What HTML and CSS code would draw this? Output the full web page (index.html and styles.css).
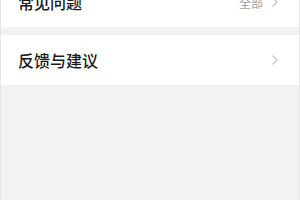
FILE: index.html
```html
<!DOCTYPE html>
<html lang="zh-CN">
<head>
    <meta charset="UTF-8">
    <meta name="viewport" content="width=device-width, initial-scale=1.0">
    <title>帮助与反馈</title>
    <link rel="stylesheet" href="styles.css">
</head>
<body>
    <div class="page">
        <div class="list">
            <div class="cell">
                <span class="cell-title">常见问题</span>
                <span class="cell-extra">全部
                    <svg class="arrow" width="8" height="12" viewBox="0 0 8 12"><path d="M1.5 1.5 L6 6 L1.5 10.5" fill="none" stroke="#c4c4c4" stroke-width="1.2"/></svg>
                </span>
            </div>
        </div>

        <div class="list">
            <div class="cell">
                <span class="cell-title">反馈与建议</span>
                <span class="cell-extra">
                    <svg class="arrow" width="8" height="12" viewBox="0 0 8 12"><path d="M1.5 1.5 L6 6 L1.5 10.5" fill="none" stroke="#c4c4c4" stroke-width="1.2"/></svg>
                </span>
            </div>
        </div>
    </div>
</body>
</html>
```

FILE: styles.css
```css
body {
    margin: 0;
    background-color: #f2f2f4;
    font-family: "Noto Sans CJK SC", "Noto Sans", sans-serif;
}

.page {
    min-height: calc(100vh + 23px);
    border-left: 1px solid #e6e6e8;
    border-right: 1px solid #e6e6e8;
    box-sizing: border-box;
    margin-top: -23px;
}

.list {
    background-color: white;
    margin-bottom: 8px;
}

.cell {
    height: 50px;
    padding: 0 20px 0 17px;
    display: flex;
    align-items: center;
    justify-content: space-between;
}

.cell-title {
    font-size: 16px;
    font-weight: 500;
    color: #1a1a1a;
}

.cell-extra {
    display: flex;
    align-items: center;
    gap: 8px;
    font-size: 12px;
    color: #a0a0a0;
}

.arrow {
    display: block;
}
```
